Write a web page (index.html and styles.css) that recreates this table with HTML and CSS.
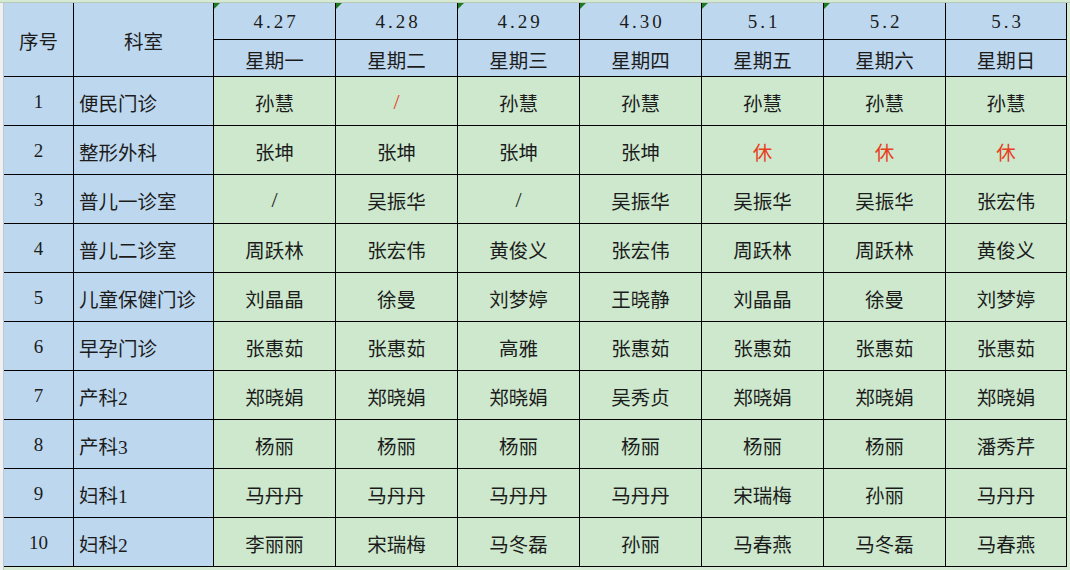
FILE: index.html
```html
<!DOCTYPE html>
<html lang="zh">
<head>
<meta charset="utf-8">
<title>排班表</title>
<link rel="stylesheet" href="styles.css">
</head>
<body>
<div class="top-strip"></div>
<div class="sheet">
  <div class="gutter"></div>
  <div class="grid">
    <div class="cell head span2">序号</div>
    <div class="cell head span2">科室</div>
    <div class="cell head date mark">4.27</div>
    <div class="cell head date mark">4.28</div>
    <div class="cell head date mark">4.29</div>
    <div class="cell head date mark">4.30</div>
    <div class="cell head date mark">5.1</div>
    <div class="cell head date mark">5.2</div>
    <div class="cell head date">5.3</div>
    <div class="cell head">星期一</div>
    <div class="cell head">星期二</div>
    <div class="cell head">星期三</div>
    <div class="cell head">星期四</div>
    <div class="cell head">星期五</div>
    <div class="cell head">星期六</div>
    <div class="cell head">星期日</div>

    <div class="cell side num">1</div><div class="cell side dept">便民门诊</div>
    <div class="cell">孙慧</div><div class="cell red slash">/</div><div class="cell">孙慧</div><div class="cell">孙慧</div><div class="cell">孙慧</div><div class="cell">孙慧</div><div class="cell">孙慧</div>

    <div class="cell side num">2</div><div class="cell side dept">整形外科</div>
    <div class="cell">张坤</div><div class="cell">张坤</div><div class="cell">张坤</div><div class="cell">张坤</div><div class="cell red">休</div><div class="cell red">休</div><div class="cell red">休</div>

    <div class="cell side num">3</div><div class="cell side dept">普儿一诊室</div>
    <div class="cell slash">/</div><div class="cell">吴振华</div><div class="cell slash">/</div><div class="cell">吴振华</div><div class="cell">吴振华</div><div class="cell">吴振华</div><div class="cell">张宏伟</div>

    <div class="cell side num">4</div><div class="cell side dept">普儿二诊室</div>
    <div class="cell">周跃林</div><div class="cell">张宏伟</div><div class="cell">黄俊义</div><div class="cell">张宏伟</div><div class="cell">周跃林</div><div class="cell">周跃林</div><div class="cell">黄俊义</div>

    <div class="cell side num">5</div><div class="cell side dept">儿童保健门诊</div>
    <div class="cell">刘晶晶</div><div class="cell">徐曼</div><div class="cell">刘梦婷</div><div class="cell">王晓静</div><div class="cell">刘晶晶</div><div class="cell">徐曼</div><div class="cell">刘梦婷</div>

    <div class="cell side num">6</div><div class="cell side dept">早孕门诊</div>
    <div class="cell">张惠茹</div><div class="cell">张惠茹</div><div class="cell">高雅</div><div class="cell">张惠茹</div><div class="cell">张惠茹</div><div class="cell">张惠茹</div><div class="cell">张惠茹</div>

    <div class="cell side num">7</div><div class="cell side dept">产科2</div>
    <div class="cell">郑晓娟</div><div class="cell">郑晓娟</div><div class="cell">郑晓娟</div><div class="cell">吴秀贞</div><div class="cell">郑晓娟</div><div class="cell">郑晓娟</div><div class="cell">郑晓娟</div>

    <div class="cell side num">8</div><div class="cell side dept">产科3</div>
    <div class="cell">杨丽</div><div class="cell">杨丽</div><div class="cell">杨丽</div><div class="cell">杨丽</div><div class="cell">杨丽</div><div class="cell">杨丽</div><div class="cell">潘秀芹</div>

    <div class="cell side num">9</div><div class="cell side dept">妇科1</div>
    <div class="cell">马丹丹</div><div class="cell">马丹丹</div><div class="cell">马丹丹</div><div class="cell">马丹丹</div><div class="cell">宋瑞梅</div><div class="cell">孙丽</div><div class="cell">马丹丹</div>

    <div class="cell side num">10</div><div class="cell side dept">妇科2</div>
    <div class="cell">李丽丽</div><div class="cell">宋瑞梅</div><div class="cell">马冬磊</div><div class="cell">孙丽</div><div class="cell">马春燕</div><div class="cell">马冬磊</div><div class="cell">马春燕</div>
  </div>
</div>
</body>
</html>
```

FILE: styles.css
```css
html, body {
  margin: 0;
  padding: 0;
}
body {
  width: 1070px;
  height: 570px;
  overflow: hidden;
  background: #d4ead3;
  font-family: "Liberation Serif", "Noto Sans CJK SC", serif;
  color: #1c1c1c;
}
.top-strip {
  height: 2px;
  background: #d4ead3;
  border-bottom: 1px solid #b9c9b9;
}
.sheet {
  display: flex;
  align-items: flex-start;
}
.gutter {
  width: 3px;
  height: 567px;
  background: #eef1f3;
  border-right: 1px solid #c4c8cc;
  flex: none;
}
.grid {
  display: grid;
  grid-template-columns: 70px 140px repeat(6, 122px) 121px;
  grid-template-rows: 37px 37px repeat(10, 49px);
}
.cell {
  position: relative;
  box-sizing: border-box;
  border-right: 1px solid #000;
  border-bottom: 1px solid #000;
  background: #cde8cd;
  display: flex;
  align-items: center;
  justify-content: center;
  font-size: 19.5px;
  white-space: nowrap;
  padding-top: 2px;
}
.head {
  background: #bdd7ee;
}
.span2 {
  grid-row: span 2;
}
.date {
  letter-spacing: 3px;
  padding-left: 3px;
  font-size: 19px;
}
.mark::before {
  content: "";
  position: absolute;
  left: 0;
  top: 0;
  width: 0;
  height: 0;
  border-top: 6px solid #1d7a1d;
  border-right: 6px solid transparent;
}
.side {
  background: #bdd7ee;
}
.num {
  font-size: 19px;
}
.dept {
  justify-content: flex-start;
  padding-left: 5px;
}
.red {
  color: #e8401e;
}
.slash {
  font-size: 22px;
}
```
